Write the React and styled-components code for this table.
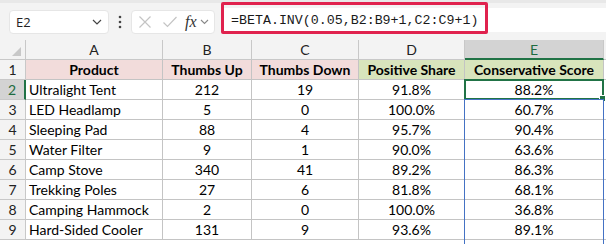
import React from "react";
import styled, { createGlobalStyle } from "styled-components";

const Global = createGlobalStyle`
  html, body { margin: 0; padding: 0; background: #ffffff; }
  body { font-family: Lato, "Noto Sans", sans-serif; }
`;

const Page = styled.div`
  width: 606px;
  height: 244px;
  overflow: hidden;
  background: #ffffff;
`;

const Bar = styled.div`
  height: 40px;
  background: #f3f3f3;
  border-top: 3px solid #e8e8e8;
  box-sizing: border-box;
  display: flex;
  align-items: center;
  padding-left: 9px;
`;

const NameBox = styled.div`
  width: 100px;
  height: 24px;
  box-sizing: border-box;
  background: #fff;
  border: 1px solid #e6e6e6;
  border-radius: 4px;
  display: flex;
  align-items: center;
  justify-content: space-between;
  padding: 0 6px 0 6px;
  font-family: "Open Sans", "Noto Sans", sans-serif;
  font-size: 13px;
  color: #222;
`;

const Dots = styled.div`
  width: 22px;
  display: flex;
  justify-content: center;
`;

const FxGroup = styled.div`
  width: 84px;
  height: 24px;
  box-sizing: border-box;
  background: #fff;
  border: 1px solid #e6e6e6;
  border-radius: 4px;
  display: flex;
  align-items: center;
  padding-left: 6px;
  gap: 0;
`;

const FormulaField = styled.div`
  flex: 1;
  margin-left: 6px;
  height: 24px;
  margin-top: -3px;
  background: #fff;
  border-radius: 4px 0 0 4px;
  position: relative;
  display: flex;
  align-items: center;
`;

const RedBox = styled.div`
  position: absolute;
  left: 0;
  top: -6px;
  width: 267px;
  height: 32px;
  box-sizing: border-box;
  border: 3px solid #e0224e;
  border-radius: 2px;
`;

const FormulaText = styled.span`
  font-family: "Liberation Mono", "DejaVu Sans Mono", monospace;
  font-size: 13.3px;
  color: #1a1a1a;
  padding-left: 10px;
  white-space: nowrap;
`;

const Grid = styled.div`
  position: relative;
  display: grid;
  grid-template-columns: 26px 137px 89px 107px 106px 139px 2px;
  grid-auto-rows: 20px;
`;

const Corner = styled.div`
  background: #f3f3f3;
  border-right: 1px solid #c8c8c8;
  border-bottom: 1px solid #c8c8c8;
  box-sizing: border-box;
  position: relative;
`;

const ColHead = styled.div`
  background: ${(p) => (p.$active ? "#d3d3d3" : "#f3f3f3")};
  border-right: 1px solid #c8c8c8;
  border-bottom: ${(p) => (p.$active ? "2px solid #217346" : "1px solid #c8c8c8")};
  box-sizing: border-box;
  display: flex;
  align-items: center;
  justify-content: center;
  font-family: Lato, sans-serif;
  font-size: 14px;
  color: ${(p) => (p.$active ? "#1d6b40" : "#222")};
  padding-top: ${(p) => (p.$active ? "1px" : "0")};
`;

const RowHead = styled.div`
  background: ${(p) => (p.$active ? "#d3d3d3" : "#f3f3f3")};
  border-right: ${(p) => (p.$active ? "2px solid #217346" : "1px solid #c8c8c8")};
  border-bottom: 1px solid #c8c8c8;
  box-sizing: border-box;
  display: flex;
  align-items: center;
  justify-content: center;
  font-family: Lato, sans-serif;
  font-size: 14px;
  color: ${(p) => (p.$active ? "#1d6b40" : "#222")};
`;

const Cell = styled.div`
  position: relative;
  background: ${(p) => p.$fill || "#fff"};
  border-right: 1px solid #c4c4c4;
  border-bottom: 1px solid #c4c4c4;
  box-sizing: border-box;
  display: flex;
  align-items: center;
  justify-content: ${(p) => (p.$left ? "flex-start" : "center")};
  padding-left: ${(p) => (p.$left ? "3px" : "0")};
  font-family: Lato, sans-serif;
  font-size: 14px;
  font-weight: ${(p) => (p.$bold ? 700 : 400)};
  color: #000;
  white-space: nowrap;
`;

const Filler = styled.div`
  background: #fff;
  border-bottom: 1px solid #c4c4c4;
  box-sizing: border-box;
`;

const HeadFiller = styled.div`
  background: #f3f3f3;
  border-bottom: 1px solid #c8c8c8;
  box-sizing: border-box;
`;

const Selection = styled.div`
  position: absolute;
  left: -1px;
  top: -1px;
  right: -1px;
  bottom: -1px;
  border: 2px solid #217346;
  pointer-events: none;
`;

const Handle = styled.div`
  position: absolute;
  right: -4px;
  bottom: -4px;
  width: 5px;
  height: 5px;
  background: #217346;
  border: 1px solid #fff;
`;

const RangeOutline = styled.div`
  position: absolute;
  left: 464px;
  top: 59px;
  width: 140px;
  height: 181px;
  box-sizing: border-box;
  border: 1px solid #4472c4;
  pointer-events: none;
`;

const Tri = styled.svg`
  position: absolute;
  right: 4px;
  bottom: 3px;
`;

const Chevron = () => (
  <svg width="10" height="6" viewBox="0 0 10 6">
    <path d="M1 1 L5 5 L9 1" fill="none" stroke="#444" strokeWidth="1.2" />
  </svg>
);

const data = [
  ["Ultralight Tent", 212, 19, "91.8%", "88.2%"],
  ["LED Headlamp", 5, 0, "100.0%", "60.7%"],
  ["Sleeping Pad", 88, 4, "95.7%", "90.4%"],
  ["Water Filter", 9, 1, "90.0%", "63.6%"],
  ["Camp Stove", 340, 41, "89.2%", "86.3%"],
  ["Trekking Poles", 27, 6, "81.8%", "68.1%"],
  ["Camping Hammock", 2, 0, "100.0%", "36.8%"],
  ["Hard-Sided Cooler", 131, 9, "93.6%", "89.1%"],
];

const PINK = "#f2dcdb";
const GREEN = "#d8e4bc";

export default function App() {
  return (
    <Page>
      <Global />
      <Bar>
        <NameBox>
          <span>E2</span>
          <Chevron />
        </NameBox>
        <Dots>
          <svg width="4" height="14" viewBox="0 0 4 14">
            <circle cx="2" cy="2" r="1.3" fill="#444" />
            <circle cx="2" cy="7" r="1.3" fill="#444" />
            <circle cx="2" cy="12" r="1.3" fill="#444" />
          </svg>
        </Dots>
        <FxGroup>
          <svg width="14" height="14" viewBox="0 0 14 14">
            <path d="M1.5 1.5 L12.5 12.5 M12.5 1.5 L1.5 12.5" stroke="#c4c4c4" strokeWidth="1.2" fill="none" />
          </svg>
          <svg width="16" height="14" viewBox="0 0 16 14" style={{ marginLeft: 10 }}>
            <path d="M1.5 7.5 L5.5 11.5 L14.5 2" stroke="#c4c4c4" strokeWidth="1.2" fill="none" />
          </svg>
          <span
            style={{
              marginLeft: 7,
              fontFamily: '"Liberation Serif", serif',
              fontStyle: "italic",
              fontSize: 16,
              color: "#333",
            }}
          >
            fx
          </span>
          <span style={{ marginLeft: 3, display: "flex" }}>
            <svg width="9" height="6" viewBox="0 0 9 6">
              <path d="M1 1 L4.5 4.5 L8 1" fill="none" stroke="#888" strokeWidth="1.1" />
            </svg>
          </span>
        </FxGroup>
        <FormulaField>
          <RedBox />
          <FormulaText>=BETA.INV(0.05,B2:B9+1,C2:C9+1)</FormulaText>
        </FormulaField>
      </Bar>
      <Grid>
        <Corner>
          <Tri width="9" height="9" viewBox="0 0 9 9">
            <path d="M9 0 L9 9 L0 9 Z" fill="#c8c8c8" />
          </Tri>
        </Corner>
        {["A", "B", "C", "D", "E"].map((l) => (
          <ColHead key={l} $active={l === "E"}>
            {l}
          </ColHead>
        ))}
        <HeadFiller />

        <RowHead>1</RowHead>
        <Cell $bold $fill={PINK}>Product</Cell>
        <Cell $bold $fill={PINK}>Thumbs Up</Cell>
        <Cell $bold $fill={PINK}>Thumbs Down</Cell>
        <Cell $bold $fill={GREEN}>Positive Share</Cell>
        <Cell $bold $fill={GREEN}>Conservative Score</Cell>
        <Filler />

        {data.map((r, i) => (
          <React.Fragment key={r[0]}>
            <RowHead $active={i === 0}>{i + 2}</RowHead>
            <Cell $left>{r[0]}</Cell>
            <Cell>{r[1]}</Cell>
            <Cell>{r[2]}</Cell>
            <Cell>{r[3]}</Cell>
            <Cell>
              {r[4]}
              {i === 0 && (
                <Selection>
                  <Handle />
                </Selection>
              )}
            </Cell>
            <Filler />
          </React.Fragment>
        ))}
        <RangeOutline />
      </Grid>
    </Page>
  );
}
